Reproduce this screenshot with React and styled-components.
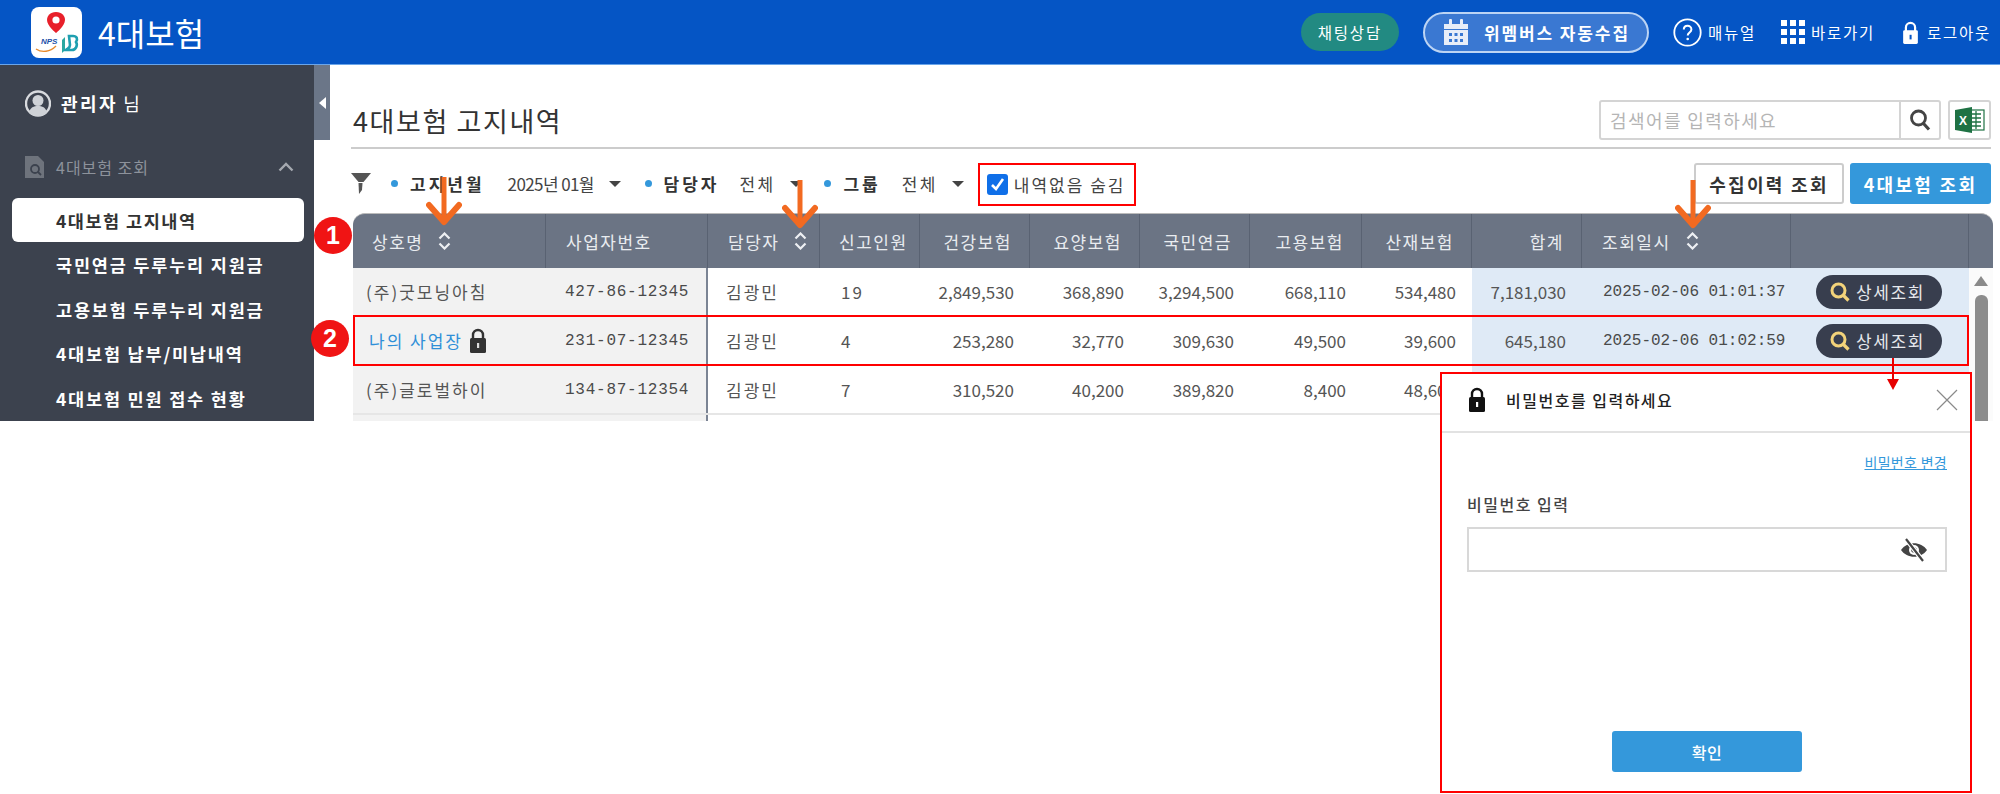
import React from 'react';
import styled, { createGlobalStyle } from 'styled-components';

const KR = `"Noto Sans CJK KR", "Liberation Sans", sans-serif`;
const MONO = `"Liberation Mono", "Noto Sans CJK KR", monospace`;
const COLS = '193px 162px 112px 100px 110px 110px 110px 112px 110px 110px 209px 178px';

const GlobalStyle = createGlobalStyle`
  html, body { margin: 0; padding: 0; background: #fff; }
  * { box-sizing: border-box; }
  body { font-family: ${KR}; color: #333; }
`;

const Page = styled.div`
  position: relative;
  width: 2000px;
  height: 794px;
  overflow: hidden;
  background: #fff;
`;

const Shell = styled.div`
  height: 421px;
  overflow: hidden;
`;

const TopBar = styled.header`
  display: flex;
  align-items: center;
  height: 65px;
  padding: 0 9px 0 31px;
  background: #0555c5;
  border-bottom: 1px solid #6aa5ea;
  color: #fff;
`;

const LogoBox = styled.div`
  width: 51px;
  height: 51px;
  border-radius: 8px;
  background: #fff;
  overflow: hidden;
`;

const AppName = styled.h1`
  margin: 0 0 0 16px;
  font-size: 32px;
  font-weight: 400;
`;

const TopActions = styled.div`
  display: flex;
  align-items: center;
  margin-left: auto;
`;

const ChatPill = styled.div`
  display: flex;
  align-items: center;
  justify-content: center;
  width: 98px;
  height: 38px;
  border-radius: 19px;
  background: #228a82;
  font-size: 15.5px;
  letter-spacing: 1.8px;
`;

const CollectPill = styled.div`
  display: flex;
  align-items: center;
  gap: 15px;
  width: 226px;
  height: 41px;
  margin: 0 24px 0 24px;
  padding-left: 18px;
  border: 2px solid #bcd4f4;
  border-radius: 21px;
  background: #3a78d2;
  font-size: 17px;
  font-weight: 700;
  letter-spacing: 1.9px;
  white-space: nowrap;
`;

const TopLink = styled.div`
  display: flex;
  align-items: center;
  gap: ${p => p.$gap}px;
  margin-right: ${p => p.$after}px;
  font-size: 15.5px;
  letter-spacing: 1.75px;
  white-space: nowrap;
`;

const Body = styled.div`
  display: flex;
  height: 356px;
`;

const Sidebar = styled.nav`
  flex: 0 0 314px;
  padding: 23px 10px 0 12px;
  background: #3c424e;
`;

const UserLine = styled.div`
  display: flex;
  align-items: center;
  height: 30px;
  padding-left: 13px;
  color: #fff;
  font-size: 18px;
  b { margin: 0 5px 0 10px; font-weight: 700; letter-spacing: 2.5px; }
`;

const SectionLine = styled.div`
  display: flex;
  align-items: center;
  gap: 12px;
  height: 24px;
  margin: 37px 0 19px;
  padding: 0 10px 0 13px;
  color: #8d929b;
  font-size: 16px;
  letter-spacing: 1px;
  svg:last-child { margin-left: auto; }
`;

const MenuItem = styled.div`
  display: flex;
  align-items: center;
  height: 44px;
  margin-bottom: 0.5px;
  padding-left: 44px;
  border-radius: 6px;
  background: ${p => (p.$active ? '#fff' : 'transparent')};
  color: ${p => (p.$active ? '#333' : '#fff')};
  font-size: 17.5px;
  font-weight: 700;
  letter-spacing: ${p => (p.$active ? '1.5px' : '1.8px')};
  white-space: nowrap;
`;

const Handle = styled.div`
  display: flex;
  align-items: center;
  justify-content: center;
  flex: 0 0 16px;
  height: 75px;
  background: #6b7688;
`;

const Main = styled.main`
  flex: 1;
  min-width: 0;
  padding: 35px 9px 0 21px;
`;

const TitleRow = styled.div`
  display: flex;
  align-items: flex-start;
  gap: 7px;
  height: 49px;
  border-bottom: 2px solid #ccc;
`;

const PageTitle = styled.h2`
  margin: 3px auto 0 2px;
  font-size: 27px;
  line-height: 36px;
  font-weight: 400;
  color: #333;
  letter-spacing: 1.6px;
  white-space: nowrap;
`;

const SearchBox = styled.div`
  display: flex;
  width: 342px;
  height: 40px;
  border: 2px solid #d4d4d4;
  border-radius: 3px;
`;

const SearchText = styled.div`
  flex: 1;
  padding-left: 9px;
  color: #b5b5b5;
  font-size: 18px;
  line-height: 36px;
  letter-spacing: 1.4px;
`;

const SearchBtn = styled.div`
  display: flex;
  align-items: center;
  justify-content: center;
  width: 40px;
  border-left: 2px solid #d4d4d4;
`;

const ExcelBtn = styled.div`
  display: flex;
  align-items: center;
  justify-content: center;
  width: 43px;
  height: 40px;
  border: 2px solid #d4d4d4;
  border-radius: 3px;
`;

const FilterRow = styled.div`
  display: flex;
  align-items: flex-start;
  height: 43px;
  margin-top: 14px;
`;

const FilterGroup = styled.div`
  display: flex;
  align-items: center;
  height: 41px;
`;

const Dot = styled.i`
  width: 7px;
  height: 7px;
  margin: 0 12px 0 ${p => p.$before}px;
  border-radius: 50%;
  background: #3498db;
`;

const FilterLabel = styled.span`
  font-size: 17px;
  font-weight: 700;
  color: #333;
  letter-spacing: 3px;
  white-space: nowrap;
`;

const FilterValue = styled.span`
  margin-left: ${p => p.$before}px;
  width: ${p => p.$width}px;
  font-size: 17px;
  color: #444;
  letter-spacing: ${p => (p.$tight ? '-0.6px' : '2.4px')};
  white-space: nowrap;
`;

const Caret = styled.i`
  width: 0;
  height: 0;
  margin-left: ${p => p.$before}px;
  border-left: 6px solid transparent;
  border-right: 6px solid transparent;
  border-top: 6px solid #444;
`;

const HideBox = styled.label`
  display: flex;
  align-items: center;
  gap: 6px;
  width: 158px;
  height: 43px;
  margin-left: 14px;
  padding-left: 7px;
  border: 2px solid #f00;
  font-size: 17px;
  color: #444;
  letter-spacing: 2px;
  white-space: nowrap;
`;

const CheckMark = styled.span`
  display: flex;
  align-items: center;
  justify-content: center;
  flex: 0 0 21px;
  height: 21px;
  border-radius: 3px;
  background: #0f6fe8;
`;

const Buttons = styled.div`
  display: flex;
  gap: 6px;
  margin-left: auto;
`;

const QueryButton = styled.div`
  display: flex;
  align-items: center;
  justify-content: center;
  width: ${p => p.$width}px;
  height: 41px;
  border: ${p => (p.$primary ? '0' : '2px solid #ccc')};
  border-radius: 3px;
  background: ${p => (p.$primary ? '#3498db' : '#fff')};
  color: ${p => (p.$primary ? '#fff' : '#333')};
  font-size: 18px;
  font-weight: 700;
  letter-spacing: 2.3px;
  white-space: nowrap;
`;

const Table = styled.div`
  margin: 7px -2px 0 2px;
`;

const HeadRow = styled.div`
  display: grid;
  grid-template-columns: ${COLS} 24px;
  height: 55px;
  border-radius: 12px 12px 0 0;
  background: #6b7484;
  border-top: 1px solid #bbb;
  overflow: hidden;
`;

const HeadCell = styled.div`
  display: flex;
  align-items: center;
  justify-content: ${p => (p.$right ? 'flex-end' : 'flex-start')};
  gap: 15px;
  padding: 0 ${p => (p.$right ? '17px' : '0')} 0 ${p => p.$pad || 0}px;
  border-right: 1px solid #596272;
  color: #e9ecf0;
  font-size: 17px;
  letter-spacing: 1.5px;
  white-space: nowrap;
  &:last-child { border-right: 0; }
`;

const TableBody = styled.div`
  display: flex;
`;

const Rows = styled.div`
  flex: 0 0 1616px;
`;

const Row = styled.div`
  position: relative;
  display: grid;
  grid-template-columns: ${COLS};
  height: 49px;
  border-bottom: 2px solid #e6e6e6;
  ${p => p.$marked && `
    &::after {
      content: '';
      position: absolute;
      inset: -2px 0 -2px 0;
      border: 2px solid #f00;
      pointer-events: none;
    }
  `}
`;

const Cell = styled.div`
  display: flex;
  align-items: center;
  justify-content: ${p => (p.$right ? 'flex-end' : 'flex-start')};
  gap: 6px;
  padding: ${p => (p.$right ? '0 16px 0 0' : `0 0 0 ${p.$pad || 0}px`)};
  background: ${p => p.$bg || '#fff'};
  border-right: ${p => (p.$divider ? '2px solid #7b8494' : '0')};
  color: ${p => p.$color || '#555'};
  font-size: 17px;
  line-height: 20px;
  letter-spacing: ${p => (p.$right ? '0' : '2px')};
  white-space: nowrap;
`;

const MonoText = styled.span`
  font-family: ${MONO};
  font-size: 16px;
  letter-spacing: ${p => p.$spacing || 0}px;
  color: #4a4a4a;
`;

const DetailButton = styled.div`
  display: flex;
  align-items: center;
  gap: 6px;
  width: 126px;
  height: 34px;
  padding-left: 14px;
  border-radius: 17px;
  background: #383e4e;
  color: #e6e8ec;
  font-size: 17px;
  letter-spacing: 1.6px;
`;

const Scrollbar = styled.div`
  display: flex;
  flex-direction: column;
  align-items: center;
  flex: 0 0 24px;
  padding-top: 8px;
  background: #fbfbfb;
`;

const ScrollUp = styled.i`
  width: 0;
  height: 0;
  border-left: 7px solid transparent;
  border-right: 7px solid transparent;
  border-bottom: 10px solid #8a8a8a;
`;

const ScrollThumb = styled.div`
  width: 13px;
  height: 200px;
  margin-top: 9px;
  border-radius: 6px;
  background: #8c8c8c;
`;

const Badge = styled.div`
  position: absolute;
  left: ${p => p.$x - 19}px;
  top: ${p => p.$y - 18}px;
  display: flex;
  align-items: center;
  justify-content: center;
  width: 38px;
  height: 37px;
  border-radius: 50%;
  background: #f01414;
  color: #fff;
  font: 700 25px "Liberation Sans", sans-serif;
`;

const ArrowMark = styled.svg`
  position: absolute;
  left: ${p => p.$x - 18}px;
  top: ${p => p.$y}px;
`;

const Popup = styled.section`
  position: absolute;
  left: 1440px;
  top: 372px;
  display: flex;
  flex-direction: column;
  width: 532px;
  height: 421px;
  border: 2px solid #f00;
  background: #fff;
`;

const PopupHead = styled.div`
  display: flex;
  align-items: center;
  gap: 20px;
  height: 59px;
  padding: 0 12px 6px 26px;
  border-bottom: 2px solid #e2e2e2;
  font-size: 16px;
  font-weight: 500;
  color: #222;
  letter-spacing: 1.5px;
  svg:last-child { margin-left: auto; }
`;

const PopupBody = styled.div`
  display: flex;
  flex-direction: column;
  flex: 1;
  padding: 19px 23px 19px 25px;
`;

const ChangeLink = styled.a`
  align-self: flex-end;
  color: #3498db;
  font-size: 14px;
  line-height: 20px;
  letter-spacing: 0.3px;
  text-decoration: underline;
`;

const FieldLabel = styled.div`
  margin-top: 21px;
  color: #444;
  font-size: 16px;
  font-weight: 500;
  line-height: 22px;
  letter-spacing: 1.5px;
`;

const PasswordField = styled.div`
  display: flex;
  align-items: center;
  justify-content: flex-end;
  height: 45px;
  margin-top: 12px;
  padding-right: 17px;
  border: 2px solid #d8d8d8;
`;

const ConfirmButton = styled.div`
  display: flex;
  align-items: center;
  justify-content: center;
  align-self: center;
  width: 190px;
  height: 41px;
  margin-top: auto;
  border-radius: 3px;
  background: #3498db;
  color: #fff;
  font-size: 16px;
  font-weight: 500;
  letter-spacing: 0.5px;
`;

const Logo = () => (
  <svg width="51" height="51" viewBox="0 0 51 51">
    <path d="M25 5c-6 0-9 4-9 8 0 6 9 13 9 13s9-7 9-13c0-4-3-8-9-8z" fill="#e8202a" />
    <circle cx="25" cy="13" r="3.6" fill="#fff" />
    <text x="10" y="37" fontSize="8" fontWeight="700" fontStyle="italic" fill="#1b4fa8" fontFamily="Liberation Sans">NPS</text>
    <path d="M5 42c6 4 14 3 20-3" fill="none" stroke="#e88a2a" strokeWidth="1.4" />
    <path d="M34 30v13l-3 3v-13z" fill="#2aa7a0" />
    <path d="M38 29h4c4 0 5 3 3 6 2 3 0 8-4 8h-6c2-2 4-2 4-5z" fill="none" stroke="#1f9fb0" strokeWidth="2.6" />
  </svg>
);

const CalendarIcon = () => (
  <svg width="26" height="26" viewBox="0 0 26 26" fill="#e8eef8">
    <rect x="6" y="0" width="3" height="6" rx="1" />
    <rect x="17" y="0" width="3" height="6" rx="1" />
    <path d="M1 5h24v5H1z" />
    <path d="M1 11h24v15H1z" />
    <g fill="#3a78d2">
      <rect x="6" y="14" width="3" height="3" />
      <rect x="11.5" y="14" width="3" height="3" />
      <rect x="17" y="14" width="3" height="3" />
      <rect x="6" y="20" width="3" height="3" />
      <rect x="11.5" y="20" width="3" height="3" />
      <rect x="17" y="20" width="3" height="3" />
    </g>
  </svg>
);

const HelpIcon = () => (
  <svg width="29" height="29" viewBox="0 0 29 29">
    <circle cx="14.5" cy="14.5" r="13.2" fill="none" stroke="#fff" strokeWidth="1.8" />
    <path d="M10.8 11.5c0-5 7.6-5 7.6 0 0 3-3.7 3-3.7 6" fill="none" stroke="#fff" strokeWidth="2" />
    <circle cx="14.7" cy="21" r="1.3" fill="#fff" />
  </svg>
);

const GridIcon = () => (
  <svg width="24" height="24" viewBox="0 0 24 24" fill="#fff">
    {[0, 9, 18].map(y =>
      [0, 9, 18].map(x => <rect key={`${x}-${y}`} x={x} y={y} width="6" height="6" />)
    )}
  </svg>
);

const LockIcon = ({ w, h, color, hole }) => (
  <svg width={w} height={h} viewBox="0 0 18 25" style={{ flex: 'none' }}>
    <path d="M4 11V7a5 5 0 0110 0v4" fill="none" stroke={color} strokeWidth="2.4" />
    <rect x="1" y="10" width="16" height="15" rx="1.5" fill={color} />
    <rect x="8" y="15" width="2.2" height="5" fill={hole} />
  </svg>
);

const UserIcon = () => (
  <svg width="26" height="29" viewBox="0 0 26 29">
    <circle cx="13" cy="14.5" r="12" fill="#3c424e" stroke="#d8dade" strokeWidth="2.4" />
    <circle cx="13" cy="11.5" r="5.5" fill="#cfd2d7" />
    <path d="M4 24c1-6 5-7 9-7s8 1 9 7c-4 4-14 4-18 0z" fill="#cfd2d7" />
  </svg>
);

const DocSearchIcon = () => (
  <svg width="19" height="22" viewBox="0 0 19 22">
    <path d="M0 0h13l6 6v16H0z" fill="#6e737c" />
    <circle cx="10" cy="13" r="4" fill="none" stroke="#3c424e" strokeWidth="1.8" />
    <path d="M13 16l3 3" stroke="#3c424e" strokeWidth="1.8" />
  </svg>
);

const ChevronUp = () => (
  <svg width="16" height="10" viewBox="0 0 16 10">
    <path d="M1.5 8.5L8 2l6.5 6.5" fill="none" stroke="#a5a9b0" strokeWidth="2.4" />
  </svg>
);

const SearchIcon = () => (
  <svg width="22" height="24" viewBox="0 0 22 24">
    <circle cx="9.5" cy="10" r="7" fill="none" stroke="#444" strokeWidth="2.8" />
    <path d="M14.5 15.5l5.5 6" stroke="#444" strokeWidth="3.2" />
  </svg>
);

const ExcelIcon = () => (
  <svg width="30" height="26" viewBox="0 0 30 26">
    <rect x="13" y="3" width="16" height="20" fill="#fff" stroke="#1f7244" strokeWidth="1.2" />
    <path d="M17 7h9M17 11h9M17 15h9M17 19h9M21 4v18" stroke="#1f7244" strokeWidth="1.3" />
    <path d="M0 3l17-3v26L0 23z" fill="#1f7244" />
    <text x="4" y="18" fontSize="12" fontWeight="700" fill="#fff" fontFamily="Liberation Sans">X</text>
  </svg>
);

const FunnelIcon = () => (
  <svg width="20" height="21" viewBox="0 0 20 21">
    <path d="M0 0h20l-7.5 9H7.500z" fill="#555" />
    <path d="M7.5 10h4l-.5 7-3 4z" fill="#555" />
  </svg>
);

const SortIcon = () => (
  <svg width="13" height="18" viewBox="0 0 13 18">
    <path d="M1.500 6.500L6.500 1.500l5 5M1.500 11.500l5 5 5-5" fill="none" stroke="#eef0f3" strokeWidth="2.200" />
  </svg>
);

const MagnifierIcon = () => (
  <svg width="20" height="20" viewBox="0 0 20 20">
    <circle cx="8.500" cy="8.500" r="6.500" fill="none" stroke="#f3d37a" strokeWidth="3" />
    <path d="M13 13l5.500 5.500" stroke="#f3d37a" strokeWidth="3.200" />
  </svg>
);

const EyeOffIcon = () => (
  <svg width="28" height="24" viewBox="0 0 28 24">
    <path d="M1 12c6-9 20-9 26 0-6 9-20 9-26 0z" fill="#444" />
    <circle cx="14" cy="12" r="5" fill="#fff" />
    <circle cx="14" cy="12" r="2.800" fill="#444" />
    <path d="M6 1l17 22" stroke="#fff" strokeWidth="4.500" />
    <path d="M6 1l17 22" stroke="#444" strokeWidth="2.200" />
  </svg>
);

const CloseIcon = () => (
  <svg width="22" height="22" viewBox="0 0 22 22">
    <path d="M1 1l20 20M21 1L1 21" stroke="#8a8a8a" strokeWidth="1.200" />
  </svg>
);

const OrangeArrow = ({ x, y }) => (
  <ArrowMark $x={x} $y={y} width="36" height="50" viewBox="0 0 36 50">
    <path d="M18 1v46" stroke="#f26a21" strokeWidth="5" />
    <path d="M3 29l15 17 15-17" fill="none" stroke="#f26a21" strokeWidth="6" strokeLinecap="round" strokeLinejoin="round" />
  </ArrowMark>
);

// the third row runs under the popup, so only its visible part has values
const rows = [
  ['(주)굿모닝아침', '427-86-12345', '김광민', '19', '2,849,530', '368,890', '3,294,500', '668,110', '534,480', '7,181,030', '2025-02-06 01:01:37'],
  ['나의 사업장', '231-07-12345', '김광민', '4', '253,280', '32,770', '309,630', '49,500', '39,600', '645,180', '2025-02-06 01:02:59'],
  ['(주)글로벌하이', '134-87-12354', '김광민', '7', '310,520', '40,200', '389,820', '8,400', '48,600', '', ''],
];

const GREY = '#f2f2f2';
const BLUE = '#dfeaf6';

const DataRow = ({ data, marked }) => (
  <Row $marked={marked}>
    <Cell $pad={marked ? 16 : 13} $bg={GREY} $color={marked ? '#2f8fd8' : '#555'}>
      {data[0]}
      {marked && <LockIcon w={18} h={25} color="#333" hole="#ddd" />}
    </Cell>
    <Cell $pad={19} $bg={GREY} $divider>
      <MonoText $spacing={0.75}>{data[1]}</MonoText>
    </Cell>
    <Cell $pad={18}>{data[2]}</Cell>
    <Cell $pad={21}>{data[3]}</Cell>
    <Cell $right>{data[4]}</Cell>
    <Cell $right>{data[5]}</Cell>
    <Cell $right>{data[6]}</Cell>
    <Cell $right>{data[7]}</Cell>
    <Cell $right>{data[8]}</Cell>
    <Cell $right $bg={BLUE}>{data[9]}</Cell>
    <Cell $pad={21} $bg={BLUE}>
      <MonoText>{data[10]}</MonoText>
    </Cell>
    <Cell $pad={25} $bg={BLUE}>
      {data[10] && (
        <DetailButton>
          <MagnifierIcon />
          상세조회
        </DetailButton>
      )}
    </Cell>
  </Row>
);

const BlankRow = () => (
  <Row>
    <Cell $bg={GREY} />
    <Cell $bg={GREY} $divider />
    <Cell />
    <Cell />
    <Cell />
    <Cell />
    <Cell />
    <Cell />
    <Cell />
    <Cell $bg={BLUE} />
    <Cell $bg={BLUE} />
    <Cell $bg={BLUE} />
  </Row>
);

export default function App() {
  return (
    <Page>
      <GlobalStyle />
      <Shell>
        <TopBar>
          <LogoBox>
            <Logo />
          </LogoBox>
          <AppName>4대보험</AppName>
          <TopActions>
            <ChatPill>채팅상담</ChatPill>
            <CollectPill>
              <CalendarIcon />
              위멤버스 자동수집
            </CollectPill>
            <TopLink $gap={6} $after={25}>
              <HelpIcon />
              매뉴얼
            </TopLink>
            <TopLink $gap={6} $after={27}>
              <GridIcon />
              바로가기
            </TopLink>
            <TopLink $gap={8} $after={0}>
              <LockIcon w={17} h={23} color="#fff" hole="#0555c5" />
              로그아웃
            </TopLink>
          </TopActions>
        </TopBar>
        <Body>
          <Sidebar>
            <UserLine>
              <UserIcon />
              <b>관리자</b> 님
            </UserLine>
            <SectionLine>
              <DocSearchIcon />
              4대보험 조회
              <ChevronUp />
            </SectionLine>
            <MenuItem $active>4대보험 고지내역</MenuItem>
            <MenuItem>국민연금 두루누리 지원금</MenuItem>
            <MenuItem>고용보험 두루누리 지원금</MenuItem>
            <MenuItem>4대보험 납부/미납내역</MenuItem>
            <MenuItem>4대보험 민원 접수 현황</MenuItem>
          </Sidebar>
          <Handle>
            <svg width="7" height="12" viewBox="0 0 7 12">
              <path d="M7 0v12L0 6z" fill="#fff" />
            </svg>
          </Handle>
          <Main>
            <TitleRow>
              <PageTitle>4대보험 고지내역</PageTitle>
              <SearchBox>
                <SearchText>검색어를 입력하세요</SearchText>
                <SearchBtn>
                  <SearchIcon />
                </SearchBtn>
              </SearchBox>
              <ExcelBtn>
                <ExcelIcon />
              </ExcelBtn>
            </TitleRow>
            <FilterRow>
              <FilterGroup>
                <FunnelIcon />
                <Dot $before={20} />
                <FilterLabel>고지년월</FilterLabel>
                <FilterValue $before={23} $width={86} $tight>2025년 01월</FilterValue>
                <Caret $before={15} />
                <Dot $before={24} />
                <FilterLabel>담당자</FilterLabel>
                <FilterValue $before={20} $width={36}>전체</FilterValue>
                <Caret $before={15} />
                <Dot $before={22} />
                <FilterLabel>그룹</FilterLabel>
                <FilterValue $before={21} $width={36}>전체</FilterValue>
                <Caret $before={14} />
              </FilterGroup>
              <HideBox>
                <CheckMark>
                  <svg width="15" height="15" viewBox="0 0 15 15">
                    <path d="M2 8l4 4 7-10" fill="none" stroke="#fff" strokeWidth="2.600" />
                  </svg>
                </CheckMark>
                내역없음 숨김
              </HideBox>
              <Buttons>
                <QueryButton $width={150}>수집이력 조회</QueryButton>
                <QueryButton $width={141} $primary>4대보험 조회</QueryButton>
              </Buttons>
            </FilterRow>
            <Table>
              <HeadRow>
                <HeadCell $pad={19}>상호명 <SortIcon /></HeadCell>
                <HeadCell $pad={20}>사업자번호</HeadCell>
                <HeadCell $pad={20}>담당자 <SortIcon /></HeadCell>
                <HeadCell $pad={19}>신고인원</HeadCell>
                <HeadCell $right>건강보험</HeadCell>
                <HeadCell $right>요양보험</HeadCell>
                <HeadCell $right>국민연금</HeadCell>
                <HeadCell $right>고용보험</HeadCell>
                <HeadCell $right>산재보험</HeadCell>
                <HeadCell $right>합계</HeadCell>
                <HeadCell $pad={20}>조회일시 <SortIcon /></HeadCell>
                <HeadCell />
                <HeadCell />
              </HeadRow>
              <TableBody>
                <Rows>
                  <DataRow data={rows[0]} />
                  <DataRow data={rows[1]} marked />
                  <DataRow data={rows[2]} />
                  <BlankRow />
                </Rows>
                <Scrollbar>
                  <ScrollUp />
                  <ScrollThumb />
                </Scrollbar>
              </TableBody>
            </Table>
          </Main>
        </Body>
      </Shell>

      <OrangeArrow x={444} y={176} />
      <OrangeArrow x={800} y={179} />
      <OrangeArrow x={1693} y={179} />
      <Badge $x={333} $y={235}>1</Badge>
      <Badge $x={330} $y={338}>2</Badge>

      <Popup>
        <PopupHead>
          <LockIcon w={18} h={25} color="#111" hole="#fff" />
          비밀번호를 입력하세요
          <CloseIcon />
        </PopupHead>
        <PopupBody>
          <ChangeLink>비밀번호 변경</ChangeLink>
          <FieldLabel>비밀번호 입력</FieldLabel>
          <PasswordField>
            <EyeOffIcon />
          </PasswordField>
          <ConfirmButton>확인</ConfirmButton>
        </PopupBody>
      </Popup>

      <ArrowMark $x={1893} $y={358} width="36" height="33" viewBox="0 0 36 33">
        <path d="M18 0v22" stroke="#e60000" strokeWidth="2" />
        <path d="M12 21h12l-6 11z" fill="#e60000" />
      </ArrowMark>
    </Page>
  );
}
